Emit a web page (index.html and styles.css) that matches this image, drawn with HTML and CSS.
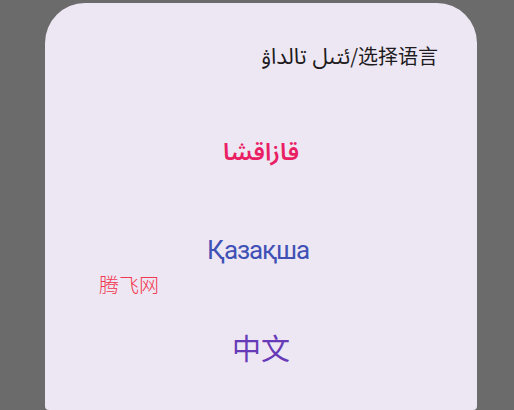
FILE: index.html
```html
<!DOCTYPE html>
<html lang="zh">
<head>
<meta charset="utf-8">
<title>选择语言</title>
<link rel="stylesheet" href="styles.css">
</head>
<body>
<div class="card">
  <div class="header">
    <span class="title"><span class="title-ar">ئتىل تالداۋ</span>/选择语言</span>
  </div>
  <div class="option opt-ar" dir="rtl">قازاقشا</div>
  <div class="option opt-kz">Қазақша</div>
  <div class="option opt-zh">中文</div>
</div>
<div class="watermark">腾飞网</div>
</body>
</html>
```

FILE: styles.css
```css
html, body {
  margin: 0;
  padding: 0;
  height: 100%;
  overflow: hidden;
}
body {
  background: #6b6b6b;
  font-family: Roboto, "Noto Sans", "DejaVu Sans", "Noto Sans CJK SC", sans-serif;
  position: relative;
}
.card {
  margin: 3px 0 0 45px;
  width: 432px;
  height: 407px;
  background: #ede7f4;
  border-radius: 40px 40px 4px 4px;
  display: flex;
  flex-direction: column;
}
.header {
  height: 101px;
  box-sizing: border-box;
  padding: 38px 39px 0 0;
  display: flex;
  justify-content: flex-end;
}
.title {
  font-size: 20px;
  line-height: 30px;
  color: #1d1b20;
  font-family: "Noto Sans CJK SC", "DejaVu Sans", sans-serif;
}
.title-ar {
  font-size: 22px;
  font-family: "Noto Sans Arabic", "Noto Sans Arabic UI", "Noto Naskh Arabic", "DejaVu Sans", sans-serif;
}
.option {
  height: 97px;
  display: flex;
  align-items: center;
  justify-content: center;
}
.opt-ar {
  color: #e91e63;
  font-size: 24px;
  font-weight: 600;
  font-family: "Noto Sans Arabic", "Noto Sans Arabic UI", "Noto Naskh Arabic", "DejaVu Sans", sans-serif;
}
.opt-kz {
  color: #3f51b5;
  font-size: 26px;
  letter-spacing: -1.2px;
  padding-right: 6px;
  font-family: Roboto, sans-serif;
}
.opt-zh {
  color: #673ab7;
  font-size: 29px;
  font-family: "Noto Sans CJK SC", sans-serif;
}
.watermark {
  position: absolute;
  left: 99px;
  top: 271px;
  font-size: 20px;
  line-height: 28px;
  color: #f2384f;
  font-weight: 300;
  font-family: "Noto Sans CJK SC", sans-serif;
}
```
